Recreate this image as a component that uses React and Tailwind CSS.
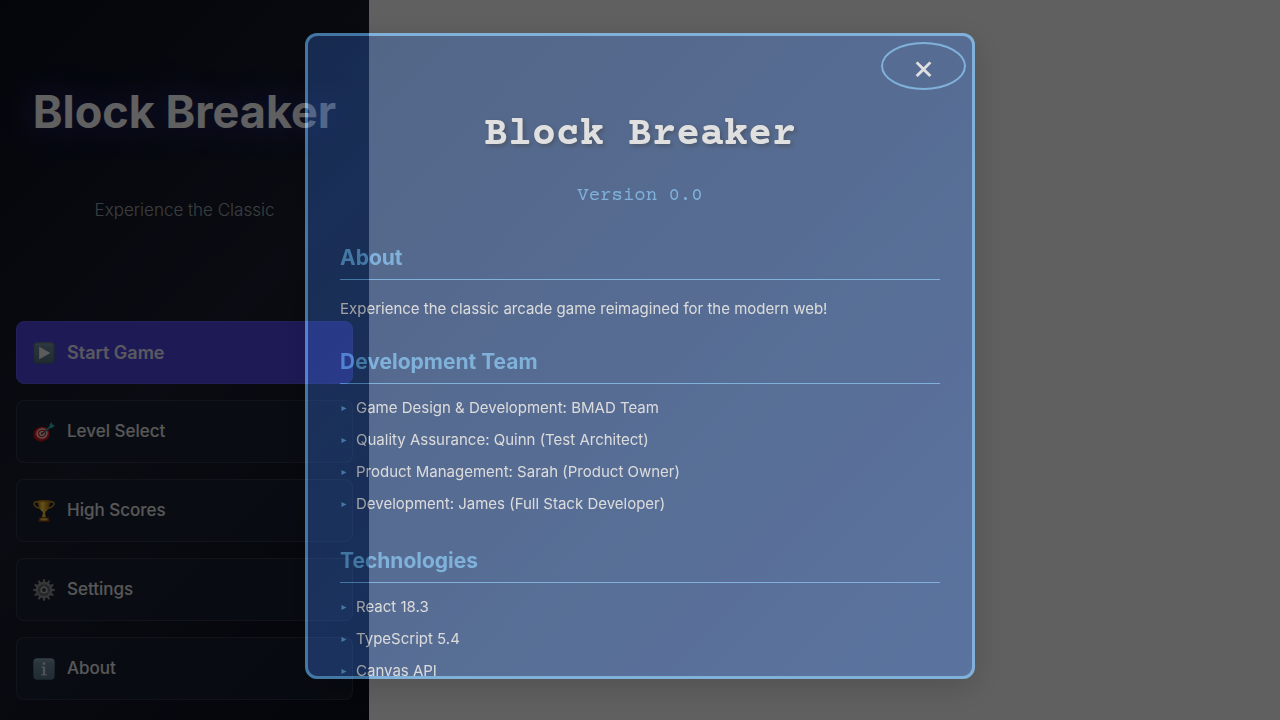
import React from "react";

function PlayIcon() {
  return (
    <svg viewBox="0 0 22 22" className="size-[22px] shrink-0" aria-hidden="true">
      <defs>
        <linearGradient id="play-tile" x1="0" y1="0" x2="0" y2="1">
          <stop offset="0" stopColor="#8aa4b4" />
          <stop offset="0.2" stopColor="#6d8a9c" />
          <stop offset="1" stopColor="#587386" />
        </linearGradient>
      </defs>
      <rect x="0.3" y="0.3" width="21.4" height="21.4" rx="4" fill="url(#play-tile)" />
      <rect x="0.8" y="0.8" width="20.4" height="20.4" rx="3.6" fill="none" stroke="#3c515f" strokeOpacity="0.6" />
      <path d="M6.2 4.8v12.4L17.400 11z" fill="#f4f4f4" />
    </svg>
  );
}

function TargetIcon() {
  return (
    <svg viewBox="0 0 22 22" className="size-[22px] shrink-0" aria-hidden="true">
      <g transform="rotate(-12 8.5 13)">
        <ellipse cx="8.3" cy="13.2" rx="8.2" ry="7.4" fill="#b3161b" />
        <ellipse cx="9" cy="12.7" rx="7.2" ry="6.6" fill="#e5252a" />
        <ellipse cx="9.1" cy="12.6" rx="5.6" ry="5.1" fill="#f3efee" />
        <ellipse cx="9.1" cy="12.6" rx="4.2" ry="3.8" fill="#dd2227" />
        <ellipse cx="9.1" cy="12.6" rx="2.8" ry="2.5" fill="#f3efee" />
        <ellipse cx="9.1" cy="12.6" rx="1.4" ry="1.3" fill="#d81e24" />
      </g>
      <path d="M9 12.6l5.5-4.2" stroke="#39474b" strokeWidth="1.1" />
      <path d="M12.800 8.500l4.900-4.500 1.600 1.800-5.300 4z" fill="#2a9aa0" />
      <path d="M16.300 5.100l1.900-4.300 1.200 2.800 2.500 1-2.900 2.400-1.800.1z" fill="#35b6b8" />
    </svg>
  );
}

function TrophyIcon() {
  return (
    <svg viewBox="0 0 22 22" className="size-[22px] shrink-0" aria-hidden="true">
      <defs>
        <linearGradient id="trophy-cup" x1="0" x2="1">
          <stop offset="0" stopColor="#c77f0c" />
          <stop offset="0.4" stopColor="#ffd84a" />
          <stop offset="0.65" stopColor="#e5a21c" />
          <stop offset="1" stopColor="#a9650a" />
        </linearGradient>
      </defs>
      <path d="M5.6 2.3C3.3 1.2.8 1.8.9 3.8 1 6.5 4 7.4 6.2 8.1c1.5.5 2.6 1.4 3.1 2.3M16.4 2.3c2.3-1.1 4.8-.5 4.7 1.5-.1 2.7-3.1 3.6-5.3 4.3-1.5.5-2.6 1.4-3.1 2.3" fill="none" stroke="#d99a1f" strokeWidth="1.3" />
      <path d="M5 .6h12c0 5-1.4 9.200-4.600 11.100l-.3 1.700.9 4.200H9l.9-4.200-.3-1.700C6.400 9.800 5 5.600 5 .6z" fill="url(#trophy-cup)" />
      <ellipse cx="11" cy="1" rx="6" ry=".8" fill="#b8770f" />
      <path d="M6 17.400h10l.8 4.300H5.200z" fill="#8a3d16" />
      <rect x="7.500" y="18.300" width="7" height="2.200" rx=".3" fill="#edc04c" />
    </svg>
  );
}

function GearIcon() {
  return (
    <svg viewBox="0 0 22 22" className="size-[22px] shrink-0" aria-hidden="true">
      <g fill="#8e9092">
        {[0, 30, 60, 90, 120, 150, 180, 210, 240, 270, 300, 330].map((angle) => (
          <path key={angle} d="M9.700 3.600l.4-3.400h1.800l.4 3.400z" transform={`rotate(${angle} 11 11)`} />
        ))}
      </g>
      <circle cx="11" cy="11" r="8.200" fill="#929496" />
      <circle cx="11" cy="11" r="6.100" fill="#606366" />
      <path d="M11 11V4.500M11 11l6 3.400M11 11l-6 3.400" stroke="#797c7e" strokeWidth="1.800" />
      <circle cx="11" cy="11" r="3.600" fill="#b5b7b8" />
      <circle cx="11" cy="11" r="2" fill="#33373b" />
    </svg>
  );
}

function InfoIcon() {
  return (
    <svg viewBox="0 0 22 22" className="size-[22px] shrink-0" aria-hidden="true">
      <defs>
        <linearGradient id="info-tile" x1="0" y1="0" x2="0" y2="1">
          <stop offset="0" stopColor="#8fa9ba" />
          <stop offset="0.2" stopColor="#6f8da1" />
          <stop offset="1" stopColor="#587489" />
        </linearGradient>
      </defs>
      <rect x="0.3" y="0.3" width="21.4" height="21.4" rx="4" fill="url(#info-tile)" />
      <circle cx="10.900" cy="5.500" r="1.500" fill="#d4dade" />
      <path d="M8.300 8.600h3.900v7.600h1.700v1.200H8.200v-1.200h1.700V9.800H8.300z" fill="#d4dade" />
    </svg>
  );
}

const menuItems = [
  { label: "Start Game", Icon: PlayIcon, primary: true },
  { label: "Level Select", Icon: TargetIcon },
  { label: "High Scores", Icon: TrophyIcon },
  { label: "Settings", Icon: GearIcon },
  { label: "About", Icon: InfoIcon },
];

const team = [
  "Game Design & Development: BMAD Team",
  "Quality Assurance: Quinn (Test Architect)",
  "Product Management: Sarah (Product Owner)",
  "Development: James (Full Stack Developer)",
];

const technologies = ["React 18.3", "TypeScript 5.4", "Canvas API"];

function MainMenu() {
  return (
    <main className="flex min-h-screen w-[369px] max-w-full flex-col bg-linear-135 from-[#0a0f1e] via-[#1a2030] to-[#0a0f1e] px-4 pt-[84px] pb-5">
      <header className="text-center">
        <h1 className="text-[45px] leading-[56px] font-bold whitespace-nowrap text-white [text-shadow:0_0_30px_rgba(79,70,229,0.6)]">
          Block Breaker
        </h1>
        <p className="mt-14 text-[17px] leading-7 font-light text-white/60">Experience the Classic</p>
      </header>
      <nav className="mt-auto flex flex-col gap-4" aria-label="Main menu">
        {menuItems.map(({ label, Icon, primary }) => (
          <button
            key={label}
            type="button"
            className={
              primary
                ? "flex h-[63px] items-center gap-3 rounded-lg border border-[#5f57e8] bg-[#4f46e5] px-4 text-lg font-semibold text-white/90"
                : "flex h-[63px] items-center gap-3 rounded-lg border border-white/10 bg-[#1a2535]/60 px-4 text-[17px] font-medium text-white/90"
            }
          >
            <Icon />
            {label}
          </button>
        ))}
      </nav>
    </main>
  );
}

function SectionHeading({ children }) {
  return (
    <h3 className="border-b border-[#64b5f6] pb-2 text-[21px] leading-[26px] font-bold text-[#64b5f6]">
      {children}
    </h3>
  );
}

function BulletList({ items }) {
  return (
    <ul className="mt-2">
      {items.map((item) => (
        <li key={item} className="flex items-center gap-2 leading-8">
          <svg viewBox="0 0 8 8" className="size-2 shrink-0" aria-hidden="true">
            <path d="M1.500 2v5L6.500 4.500z" fill="#64b5f6" />
          </svg>
          {item}
        </li>
      ))}
    </ul>
  );
}

function AboutDialog() {
  return (
    <div className="fixed inset-0 flex items-center justify-center bg-black/80 pb-2 opacity-78">
      <div
        role="dialog"
        aria-modal="true"
        aria-labelledby="about-title"
        className="relative flex max-h-[646px] w-full max-w-[670px] flex-col overflow-hidden rounded-xl border-3 border-[#64b5f6] bg-linear-135 from-[#1e3c72] to-[#2a5298] opacity-80 shadow-[0_8px_32px_rgba(0,0,0,0.5)]"
      >
        <button
          type="button"
          aria-label="Close"
          className="absolute top-1.5 right-1.5 flex h-12 w-[85px] items-center justify-center rounded-[50%] border-2 border-[#64b5f6] pt-0.5 text-[34px] leading-none text-white"
        >
          ×
        </button>
        <div className="overflow-y-auto px-8 pt-[76px] pb-8 text-[15px] text-[#f8f8f8] [scrollbar-width:none]">
          <header className="text-center font-['Courier_Prime','Courier_10_Pitch','Nimbus_Mono_PS',Courier,'Liberation_Mono',monospace]">
            <h2
              id="about-title"
              className="text-[40px] leading-[48px] font-bold text-white [text-shadow:2px_2px_4px_rgba(0,0,0,0.5)]"
            >
              Block Breaker
            </h2>
            <p className="mt-6 text-[19px] leading-6 text-[#64b5f6]">Version 0.0</p>
          </header>
          <section className="mt-[37px]">
            <SectionHeading>About</SectionHeading>
            <p className="mt-4 leading-[25px]">
              Experience the classic arcade game reimagined for the modern web!
            </p>
          </section>
          <section className="mt-7">
            <SectionHeading>Development Team</SectionHeading>
            <BulletList items={team} />
          </section>
          <section className="mt-7">
            <SectionHeading>Technologies</SectionHeading>
            <BulletList items={technologies} />
          </section>
        </div>
      </div>
    </div>
  );
}

export default function App() {
  return (
    <div className="min-h-screen bg-white font-[Inter,sans-serif]">
      <MainMenu />
      <AboutDialog />
    </div>
  );
}
